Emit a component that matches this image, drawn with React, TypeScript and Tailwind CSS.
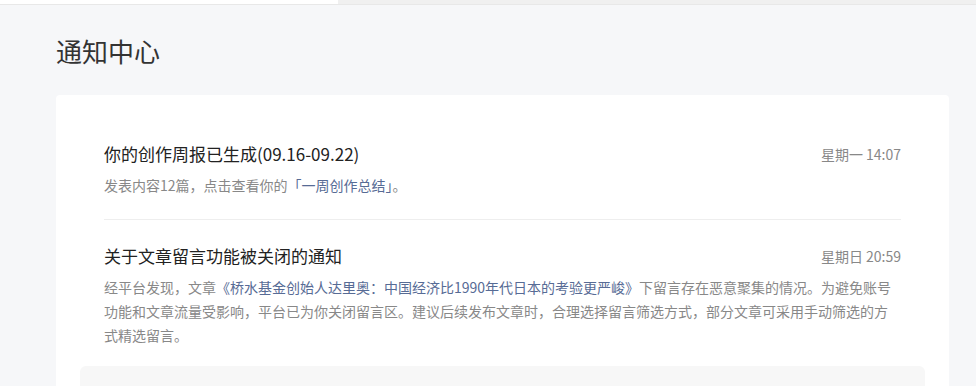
import React from "react";

type Notice = {
  title: string;
  time: string;
  body: React.ReactNode;
};

const link = "text-[#576b95]";

const notices: Notice[] = [
  {
    title: "你的创作周报已生成(09.16-09.22)",
    time: "星期一 14:07",
    body: (
      <>
        发表内容12篇，点击查看你的<span className={link}>「一周创作总结」</span>。
      </>
    ),
  },
  {
    title: "关于文章留言功能被关闭的通知",
    time: "星期日 20:59",
    body: (
      <>
        经平台发现，文章
        <span className={link}>《桥水基金创始人达里奥：中国经济比1990年代日本的考验更严峻》</span>
        下留言存在恶意聚集的情况。为避免账号功能和文章流量受影响，平台已为你关闭留言区。建议后续发布文章时，合理选择留言筛选方式，部分文章可采用手动筛选的方式精选留言。
      </>
    ),
  },
];

export default function App() {
  return (
    <div
      className="min-h-screen bg-[#f6f7f9] text-[#222]"
      style={{ fontFamily: '"Noto Sans CJK SC", "Noto Sans", sans-serif' }}
    >
      {/* top bar remnant */}
      <div className="flex h-[5px] border-b border-[#e8e8e8]">
        <div className="w-[338px] bg-white" />
        <div className="flex-1 bg-[#f0f0f0]" />
      </div>

      <div className="ml-[56px] w-[893px]">
        <h1 className="pt-[28px] text-[26px] leading-[36px] font-normal text-[#333]">通知中心</h1>

        <div className="mt-[26px] rounded-[4px] bg-white pt-[23px] pb-6">
          <ul className="px-[48px]">
            {notices.map((n, i) => (
              <li
                key={i}
                className={
                  i === 0
                    ? "border-b border-[#eeeeee] pt-[24px] pb-[22px]"
                    : "pt-[24px] pb-[19px]"
                }
              >
                <div className="flex items-center justify-between">
                  <span className="text-[17px] leading-[24px] text-[#222]">{n.title}</span>
                  <span className="text-[14px] leading-[24px] text-[#888]">{n.time}</span>
                </div>
                <p className="mt-[7px] pr-2 text-[14px] leading-[24px] text-[#888]">{n.body}</p>
              </li>
            ))}
          </ul>

          <div className="mx-[24px] h-[80px] rounded-[6px] bg-[#f7f7f7]" />
        </div>
      </div>
    </div>
  );
}
